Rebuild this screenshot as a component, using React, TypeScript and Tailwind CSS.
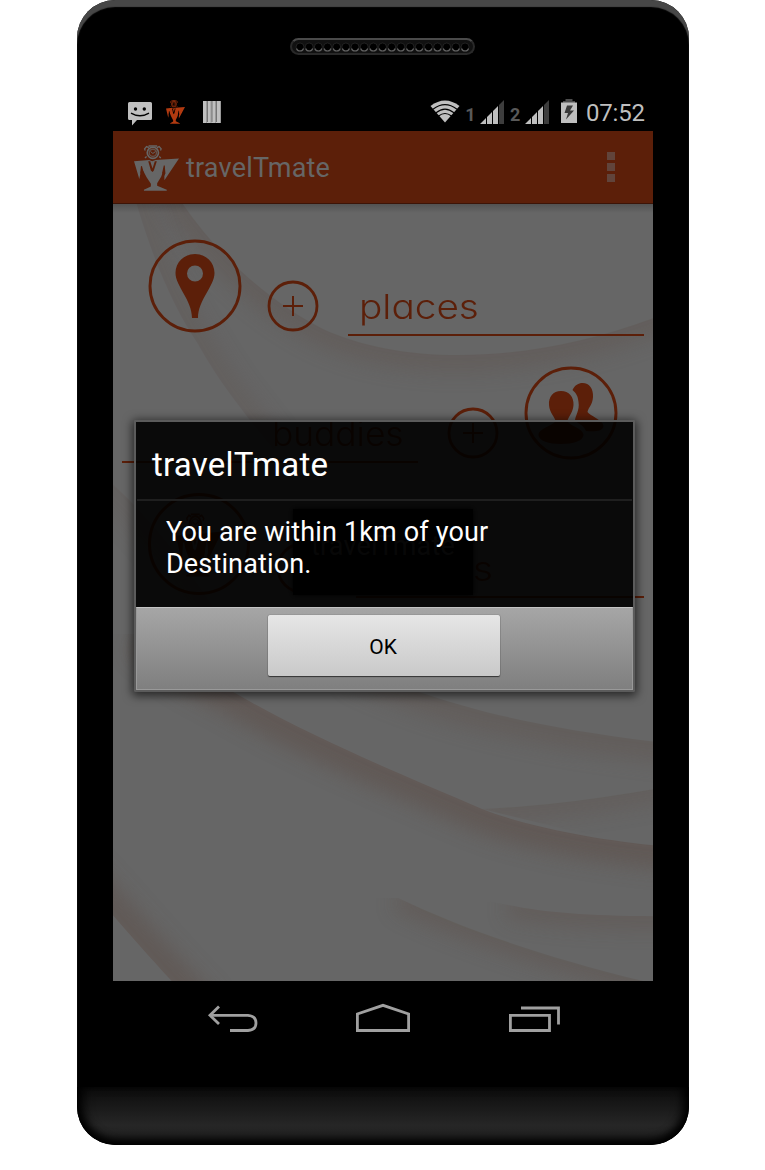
import React from "react";

const ORANGE = "#5c1f09";

function Mascot({ className, fill, cut }: { className: string; fill: string; cut: string }) {
  return (
    <svg className={className} viewBox="192 433 136 141" preserveAspectRatio="none">
      <g fill="none" stroke={fill} strokeWidth="4">
        <circle cx="249" cy="457" r="17" strokeWidth="5" />
        <circle cx="249" cy="457" r="11" strokeWidth="4" opacity="0.7" />
        <path d="M242 453 L249 459 L257 453" strokeWidth="3" />
        <path d="M226 450 L224 445 L230 438 L237 441 M272 450 L274 445 L268 438 L261 441 M236 436 H262 M230 468 L225 473 M268 468 L273 473" />
      </g>
      <path
        fill={fill}
        d="M192 483 L238 479 L247 483 L257 479 L328 474 L284 541 L283 506 L274 530 L262 550 V558 L291 570 V573 H222 V570 L243 560 V552 L230 532 L215 503 L208 537 Z"
      />
      <path fill={cut} d="M213 498 L216 497 L222 520 L217 530 L211 518 Z M282 496 L285 496 L287 520 L281 532 L277 518 Z" />
      <path fill={cut} d="M235 483 L241 483 L248 505 L255 483 L261 483 L252 511 L248 516 L243 511 Z" />
    </svg>
  );
}

function Signal() {
  return (
    <svg className="h-6 w-6" viewBox="0 0 24 24">
      <path fill="#bfbfbf" d="M0 24 L6 18 V24 Z M7 24 V17 L12 12 V24 Z M13 24 V11 L18 6 V24 Z" />
      <path fill="#3d3d3d" d="M19 24 V5 L24 0 V24 Z" />
    </svg>
  );
}

function StatusBar() {
  return (
    <div className="flex h-9 items-start pt-1 font-[Roboto,sans-serif] text-[#bfbfbf]">
      <svg className="mt-[3px] ml-[15px] h-6 w-6" viewBox="0 0 24 24">
        <path fill="#bfbfbf" d="M1.500 0 H22.500 Q24 0 24 1.500 V16.500 Q24 18 22.500 18 H9 L4 23.500 V18 H1.500 Q0 18 0 16.500 V1.500 Q0 0 1.500 0 Z" />
        <circle cx="7.500" cy="7" r="1.700" />
        <circle cx="16.300" cy="7" r="1.700" />
        <path d="M3 11.200 Q12 16.500 21 11.200" fill="none" stroke="#000" strokeWidth="1.500" />
      </svg>
      <Mascot className="mt-px ml-3.5 h-6 w-[19px]" fill="#b23a10" cut="#000000" />
      <svg className="mt-0.5 ml-[18px] h-[22px] w-[18px]" viewBox="0 0 18 22">
        <rect width="18" height="22" fill="#bfbfbf" />
        <path d="M3.500 0 V22 M8 0 V22 M12.500 0 V22 M17.500 0 V22" stroke="#999" strokeWidth="1" />
        <path d="M4.500 0 V21 M9 0 V21 M13.500 0 V21" stroke="#555" strokeWidth=".7" />
      </svg>
      <svg className="mt-px ml-[209px] h-[23px] w-[30px]" viewBox="0 0 30 23">
        <path d="M0.500 6 Q15 -5 29.500 6 L15 22.500 Z" fill="#bfbfbf" />
        <path d="M3 9.200 Q15 0 27 9.200 M6 12.800 Q15 5.500 24 12.800 M8.500 16 Q15 11 21.500 16" fill="none" stroke="#000" strokeWidth="1.100" />
      </svg>
      <span className="mt-1.5 ml-[3px] w-[15px] text-center text-[18px] leading-5 font-bold text-[#595959]">1</span>
      <div className="mt-px ml-0.5">
        <Signal />
      </div>
      <span className="mt-1.5 ml-1.5 w-[12px] text-[18px] leading-5 font-bold text-[#595959]">2</span>
      <div className="mt-px ml-[3px]">
        <Signal />
      </div>
      <svg className="ml-3 h-6 w-4" viewBox="0 0 16 24">
        <path d="M4.500 0 H11.500 V2 H14 V4 H2 V2 H4.500 Z" fill="#4d4d4d" />
        <rect y="3.500" width="16" height="20.500" fill="#bfbfbf" />
        <path d="M6 6.500 H12 L9 11.500 H13 L5 20.500 L7 14 H3.500 Z" fill="#3a3a3a" />
      </svg>
      <span className="ml-[9px] text-[24px] leading-7 tracking-[-0.2px]">07:52</span>
    </div>
  );
}

function ActionBar() {
  return (
    <header className="flex h-[73px] items-start border-b border-[#3c1407] bg-[#5c1f09]">
      <Mascot className="mt-3.5 ml-[21px] h-[46px] w-[45px]" fill="#666666" cut={ORANGE} />
      <span className="mt-[21px] ml-[7px] font-[Roboto,sans-serif] text-[27px] leading-8 tracking-[0.2px] text-[#666]">travelTmate</span>
      <div className="mt-[21px] mr-[38px] ml-auto flex flex-col gap-[3px]">
        <i className="size-2 bg-[#61443b]" />
        <i className="size-2 bg-[#61443b]" />
        <i className="size-2 bg-[#61443b]" />
      </div>
    </header>
  );
}

const waves = [
  { edge: "M60 -15 C100 50 160 100 210 125 C300 166 440 160 580 98", side: "L580 500 L0 500 L0 -15 Z", w: 34, o: 0.34 },
  { edge: "M18 -20 C40 60 62 105 85 140 C105 175 120 195 160 245", side: "L540 245 L540 -20 Z", w: 34, o: 0.24 },
  { edge: "M30 430 C70 465 100 477 122 489 C200 535 300 575 369 605 C420 625 500 639 580 645", side: "L580 776 L0 776 L0 430 Z", w: 46, o: 0.55 },
  { edge: "M240 460 C320 500 420 525 580 542", side: "L580 620 L100 620 Z", w: 40, o: 0.34 },
  { edge: "M369 605 C430 602 490 595 580 578", side: "L580 648 L480 632 L369 605 Z", w: 30, o: 0.3 },
  { edge: "M285 694 C350 725 440 757 560 784", side: "L200 784 L200 694 Z", w: 24, o: 0.42 },
  { edge: "M395 701 C440 710 490 713 580 712", side: "L580 784 L340 784 L340 690 Z", w: 26, o: 0.38 },
  { edge: "M-40 667 C5 715 30 748 90 810", side: "L300 810 L300 550 L-40 550 Z", w: 44, o: 0.5 },
  { edge: "M-30 255 C40 310 80 370 130 450", side: "L-30 450 Z", w: 44, o: 0.15 },
];

function Backdrop() {
  return (
    <svg className="absolute inset-0 h-full w-full" viewBox="0 0 540 777">
      <defs>
        <filter id="soft" filterUnits="userSpaceOnUse" x="-80" y="-80" width="700" height="940">
          <feGaussianBlur stdDeviation="10" />
        </filter>
        <linearGradient id="barShade" x1="0" y1="0" x2="0" y2="1">
          <stop offset="0" stopColor="#000" stopOpacity=".2" />
          <stop offset="1" stopColor="#000" stopOpacity="0" />
        </linearGradient>
        {waves.map((w, i) => (
          <clipPath id={"wave" + i} key={i}>
            <path d={w.edge + " " + w.side} />
          </clipPath>
        ))}
      </defs>
      {waves.map((w, i) => (
        <g clipPath={"url(#wave" + i + ")"} key={i}>
          <path d={w.edge} fill="none" stroke="#5d504a" strokeWidth={w.w} opacity={w.o} filter="url(#soft)" />
        </g>
      ))}
      <rect width="540" height="9" fill="url(#barShade)" />
    </svg>
  );
}

function PlusIcon({ className }: { className: string }) {
  return (
    <svg className={className} viewBox="0 0 52 52" fill="none" stroke={ORANGE}>
      <circle cx="26" cy="26" r="24" strokeWidth="2.800" />
      <path d="M16 26 H36 M26 16 V36" strokeWidth="2" />
    </svg>
  );
}

function PinIcon() {
  return (
    <svg className="size-[94px] shrink-0" viewBox="0 0 94 94">
      <circle cx="47" cy="47" r="45" fill="none" stroke={ORANGE} strokeWidth="2.900" />
      <path
        fill={ORANGE}
        fillRule="evenodd"
        d="M47 15 C58 15 66.500 23.500 66.500 34 C66.500 47 50 61 50 79 H44 C44 61 27.500 47 27.500 34 C27.500 23.500 36 15 47 15 Z M47 26.500 A8 8 0 1 0 47 42.500 A8 8 0 1 0 47 26.500 Z"
      />
    </svg>
  );
}

function PeopleIcon() {
  return (
    <svg className="ml-[25px] size-[94px] shrink-0" viewBox="0 0 94 94">
      <circle cx="47" cy="47" r="45" fill="none" stroke={ORANGE} strokeWidth="2.900" />
      <g fill={ORANGE}>
        <path d="M37 25 C45 25 50 31 49.500 39 C49 47 44 51 43.500 55 C45 60 59 62 59.500 69 C59 75 49 78 37 78 C25 78 15 75 14.500 69 C15 62 29 60 31.500 55 C31 51 25.500 47 25 39 C24.500 31 29 25 37 25 Z" />
        <path d="M48.500 24 C51 19 54.500 17 58.500 17 C65.500 17 69.500 23 69 31 C68.500 39 64 42 63.500 46 C66 50 79 54 79.500 60 C79 65 71 66 62 65 C60 60 56 58 51 55 C51 50 56 44 54.500 36 C54 30 52 27 48.500 24 Z" />
      </g>
    </svg>
  );
}

function MascotIcon() {
  return (
    <div className="flex size-[102px] shrink-0 items-start justify-center rounded-full border-[3px] border-[#5c1f09] pt-[17px]">
      <Mascot className="h-[64px] w-[46px]" fill={ORANGE} cut="#666666" />
    </div>
  );
}

const label =
  "flex font-[Inter,sans-serif] text-[34px] leading-10 font-light text-[#5c1f09] [font-feature-settings:'cv11'] border-b-2 border-[#5c1f09] pb-[7px] whitespace-nowrap";

function Toast() {
  return (
    <div className="absolute top-[305px] left-[180px] flex h-[86px] w-[180px] justify-center bg-black pt-[21px] shadow-[0_0_5px_#000]">
      <span className="font-[Roboto,sans-serif] text-[27px] leading-8 tracking-[0.2px] text-[#4c4c4c]">travelTmate</span>
    </div>
  );
}

function Dialog() {
  return (
    <div className="absolute inset-x-0 top-[289px] flex justify-center">
      <section className="ml-[3px] h-[272px] w-[501px] rounded-[2px] border-2 border-[#5b5b5b] font-[Roboto,sans-serif] shadow-[0_2px_10px_2px_rgba(0,0,0,0.6)]">
        <div className="h-[185px] bg-black/90 px-px text-white">
          <h2 className="h-[79px] border-b-2 border-[#1f1f1f] pt-[23px] pl-[15px] text-[33px] leading-10 tracking-[0.25px]">travelTmate</h2>
          <p className="pt-[15px] pl-[29px] text-[27px] leading-8 tracking-[0.15px]">
            You are within 1km of your
            <br />
            Destination.
          </p>
        </div>
        <div className="flex h-[83px] justify-center border border-t-[#c4c4c4] border-r-[#999] border-b-[#999] border-l-[#999] bg-linear-to-b from-[#a6a6a6] to-[#7f7f7f] pt-[7px]">
          <button className="mr-px h-[61px] w-[232px] rounded-[2px] bg-linear-to-b from-[#e6e6e6] to-[#c9c9c9] pt-1 pr-0.5 text-[21px] text-black shadow-[0_1px_1px_#333,0_0_1px_#333]">
            OK
          </button>
        </div>
      </section>
    </div>
  );
}

function Speaker() {
  return (
    <div className="mt-[38px] mr-px flex h-[17px] w-[185px] items-center justify-center rounded-full border-2 border-[#292929] border-t-[#4a4a4a] bg-[#111]">
      <svg className="h-[13px] w-[175px]" viewBox="0 0 175 13">
        {Array.from({ length: 19 }, (_, i) => (
          <g key={i}>
            <circle cx={5 + i * 9.17} cy="7" r="4" fill="#000" stroke="#333" strokeWidth=".6" />
            <path d={`M${1.5 + i * 9.17} 8.500 a3.600 3.200 0 0 0 7 0`} fill="none" stroke="#606060" strokeWidth="1.100" />
          </g>
        ))}
      </svg>
    </div>
  );
}

function NavBar() {
  return (
    <nav className="flex h-[106px] items-start pt-[22px]">
      <svg className="ml-[94px] h-[30px] w-[52px]" viewBox="0 0 52 30" fill="none" stroke="#a0a0a0" strokeWidth="2.800">
        <path d="M3 12.300 H41 Q49 13 49 20 Q49 27 41 27.500 H23" />
        <path d="M12 3.500 L3 12.300 L12 21" />
      </svg>
      <svg className="ml-[96px] h-[30px] w-[56px]" viewBox="0 0 56 30" fill="none" stroke="#a0a0a0" strokeWidth="2.800">
        <path d="M2.400 27.500 V11 L28 2.300 L53.600 11 V27.500 Z" />
      </svg>
      <svg className="ml-[97px] h-[30px] w-[54px]" viewBox="0 0 54 30" fill="none" stroke="#a0a0a0" strokeWidth="2.800">
        <path d="M2.400 12.300 H41.500 V27.500 H2.400 Z M13 5 H50.500 V21.500" />
      </svg>
    </nav>
  );
}

export default function App() {
  return (
    <div className="h-[1170px] w-[765px] bg-white pl-[77px]">
      <div className="flex h-[1145px] w-[612px] flex-col overflow-hidden rounded-[38px] bg-black shadow-[inset_0_7px_1px_#474747]">
        <div className="flex h-[95px] shrink-0 justify-center">
          <Speaker />
        </div>
        <div className="mx-9 shrink-0">
          <StatusBar />
          <div className="relative h-[850px] overflow-hidden bg-[#666]">
            <ActionBar />
            <main className="relative h-[777px]">
              <Backdrop />
              <div className="relative flex flex-col gap-[30px] pt-[35px]">
                <div className="flex h-[98px] items-start pl-[35px]">
                  <PinIcon />
                  <PlusIcon className="mt-[41px] ml-[25px] size-[52px] shrink-0" />
                  <div className={label + " mt-12 ml-[29px] w-[296px] pl-[11px]"}>
                    <span className="origin-left scale-x-[1.14]">places</span>
                  </div>
                </div>
                <div className="-mt-px flex h-[98px] items-start pl-[9px]">
                  <div className={label + " mt-12 w-[296px] justify-end pr-[14px]"}>
                    <span className="origin-right scale-x-[1.04]">buddies</span>
                  </div>
                  <PlusIcon className="mt-[41px] ml-[29px] size-[52px] shrink-0" />
                  <PeopleIcon />
                </div>
                <div className="-mt-px flex items-start pl-[35px]">
                  <MascotIcon />
                  <PlusIcon className="mt-[49px] ml-[26px] size-[52px] shrink-0" />
                  <div className={label + " mt-14 ml-[28px] w-[288px] pl-[12px]"}>
                    <span className="origin-left scale-x-[1.15]">alarms</span>
                  </div>
                </div>
              </div>
              <Toast />
            </main>
            <Dialog />
          </div>
          <NavBar />
        </div>
        <div className="h-[58px] shrink-0 rounded-b-[38px] bg-linear-to-b from-[#0c0c0c] via-[#262626] via-65% to-[#202020] shadow-[inset_0_-6px_9px_#000,inset_9px_0_12px_-4px_#000,inset_-9px_0_12px_-4px_#000]" />
      </div>
    </div>
  );
}
